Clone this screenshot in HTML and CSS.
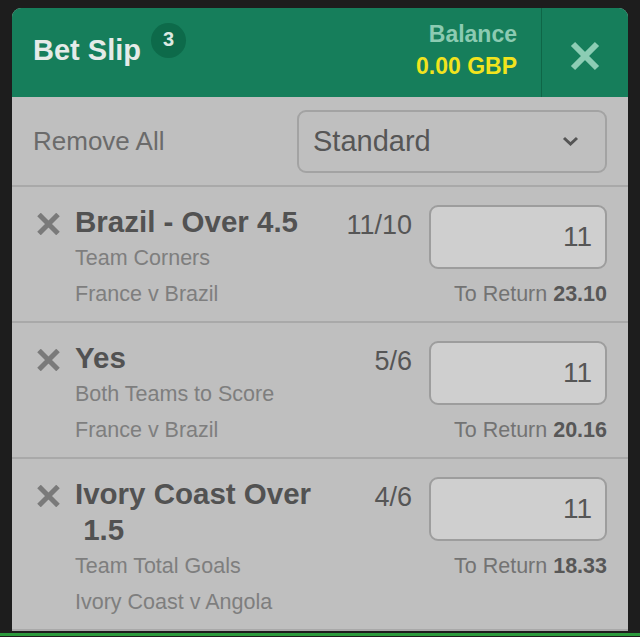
FILE: index.html
```html
<!DOCTYPE html>
<html lang="en">
<head>
  <meta charset="UTF-8" />
  <meta name="viewport" content="width=device-width, initial-scale=1.0" />
  <title>Bet Slip</title>
  <link rel="stylesheet" href="styles.css">
</head>
<body>
  <div class="wrap">
    <div class="slip">
      <div class="slip-header">
        <div class="slip-title">
          <h1>Bet Slip</h1>
          <span class="count">3</span>
        </div>
        <div class="balance">
          <div class="balance-label">Balance</div>
          <div class="balance-value">0.00 GBP</div>
        </div>
        <button class="close" aria-label="Close">
          <svg width="30" height="30" viewBox="0 0 30 30"><path d="M3 3L27 27M27 3L3 27" stroke="#8ccdb4" stroke-width="6"/></svg>
        </button>
      </div>

      <div class="toolbar">
        <span class="remove-all">Remove All</span>
        <div class="bet-type">
          <span>Standard</span>
          <svg width="17" height="10" viewBox="0 0 17 10"><path d="M2 2L8.5 8L15 2" fill="none" stroke="#555" stroke-width="3"/></svg>
        </div>
      </div>

      <div class="bet">
        <svg class="bet-remove" width="23" height="22" viewBox="0 0 23 22"><path d="M2 1.5L21 20.5M21 1.5L2 20.5" stroke="#7a7a7a" stroke-width="5"/></svg>
        <div class="bet-info">
          <div class="bet-name">Brazil - Over 4.5</div>
          <div class="bet-market">Team Corners</div>
          <div class="bet-market">France v Brazil</div>
        </div>
        <div class="bet-side">
          <div class="bet-price">
            <span class="odds">11/10</span>
            <input class="stake" type="text" value="11">
          </div>
          <div class="bet-return">To Return <b>23.10</b></div>
        </div>
      </div>

      <div class="bet">
        <svg class="bet-remove" width="23" height="22" viewBox="0 0 23 22"><path d="M2 1.5L21 20.5M21 1.5L2 20.5" stroke="#7a7a7a" stroke-width="5"/></svg>
        <div class="bet-info">
          <div class="bet-name">Yes</div>
          <div class="bet-market">Both Teams to Score</div>
          <div class="bet-market">France v Brazil</div>
        </div>
        <div class="bet-side">
          <div class="bet-price">
            <span class="odds">5/6</span>
            <input class="stake" type="text" value="11">
          </div>
          <div class="bet-return">To Return <b>20.16</b></div>
        </div>
      </div>

      <div class="bet">
        <svg class="bet-remove" width="23" height="22" viewBox="0 0 23 22"><path d="M2 1.5L21 20.5M21 1.5L2 20.5" stroke="#7a7a7a" stroke-width="5"/></svg>
        <div class="bet-info">
          <div class="bet-name">Ivory Coast Over &nbsp;1.5</div>
          <div class="bet-market">Team Total Goals</div>
          <div class="bet-market">Ivory Coast v Angola</div>
        </div>
        <div class="bet-side">
          <div class="bet-price">
            <span class="odds">4/6</span>
            <input class="stake" type="text" value="11">
          </div>
          <div class="bet-return">To Return <b>18.33</b></div>
        </div>
      </div>
    </div>
  </div>
  <div class="footer"></div>
</body>
</html>
```

FILE: styles.css
```css
body {
  margin: 0;
  background: #1d1d1d;
  font-family: "Liberation Sans", Arial, sans-serif;
  overflow: hidden;
}
.wrap {
  padding: 8px 12px 0 12px;
}
.slip {
  background: #bfbfbf;
  border-radius: 9px 9px 0 0;
  overflow: hidden;
}
.slip-header {
  display: flex;
  height: 89px;
  background: #167e5b;
}
.slip-title {
  flex: 1;
  display: flex;
  align-items: flex-start;
  padding: 15px 0 0 21px;
}
.slip-title h1 {
  margin: 9px 0 0 0;
  font-size: 29px;
  line-height: 36px;
  font-weight: bold;
  color: #e5ebe8;
}
.count {
  width: 35px;
  height: 35px;
  margin-left: 10px;
  border-radius: 50%;
  background: #0d6a4a;
  color: #dbe9e2;
  font-size: 20px;
  font-weight: bold;
  line-height: 33px;
  text-align: center;
}
.balance {
  padding: 10px 24px 0 0;
  text-align: right;
  font-size: 23px;
  line-height: 32px;
  font-weight: bold;
}
.balance-label {
  color: #8ccbb2;
}
.balance-value {
  color: #f1e41e;
}
.close {
  width: 87px;
  border: none;
  border-left: 1px solid #0e6647;
  background: none;
  padding: 6px 0 0 0;
  display: flex;
  align-items: center;
  justify-content: center;
}
.toolbar {
  display: flex;
  align-items: center;
  justify-content: space-between;
  height: 88px;
  padding: 0 21px;
  border-bottom: 2px solid #a9a9a9;
}
.remove-all {
  font-size: 26px;
  line-height: 30px;
  color: #6b6b6b;
}
.bet-type {
  box-sizing: border-box;
  width: 310px;
  height: 63px;
  display: flex;
  align-items: center;
  justify-content: space-between;
  padding: 0 26px 0 14px;
  border: 2px solid #a3a3a3;
  border-radius: 9px;
  font-size: 29px;
  color: #565656;
}
.bet {
  display: flex;
  padding: 17px 21px 9px 25px;
  border-bottom: 2px solid #a9a9a9;
}
.bet-remove {
  flex-shrink: 0;
  margin: 9px 15px 0 0;
}
.bet-info {
  flex: 1;
}
.bet-name {
  font-size: 29.5px;
  line-height: 36px;
  font-weight: bold;
  color: #525252;
}
.bet-market {
  font-size: 21.5px;
  line-height: 36px;
  color: #7e7e7e;
}
.bet-side {
  display: flex;
  flex-direction: column;
  align-items: flex-end;
}
.bet-price {
  display: flex;
  align-items: flex-start;
  gap: 17px;
}
.odds {
  min-width: 72px;
  margin-top: 3px;
  font-size: 27px;
  line-height: 36px;
  color: #565656;
  text-align: right;
}
.stake {
  box-sizing: border-box;
  width: 178px;
  height: 64px;
  margin: 1px 0 0 0;
  padding: 0 13px;
  border: 2px solid #9d9d9d;
  border-radius: 9px;
  background: #cfcfcf;
  font-family: "Liberation Sans", Arial, sans-serif;
  font-size: 28px;
  color: #565656;
  text-align: right;
}
.bet-return {
  margin-top: 7px;
  font-size: 21.5px;
  line-height: 36px;
  color: #737373;
}
.bet-return b {
  color: #575757;
}
.footer {
  margin-top: 2px;
  height: 10px;
  border-top: 3px solid #2b9a3c;
  background: #1d1d1d;
}
```
